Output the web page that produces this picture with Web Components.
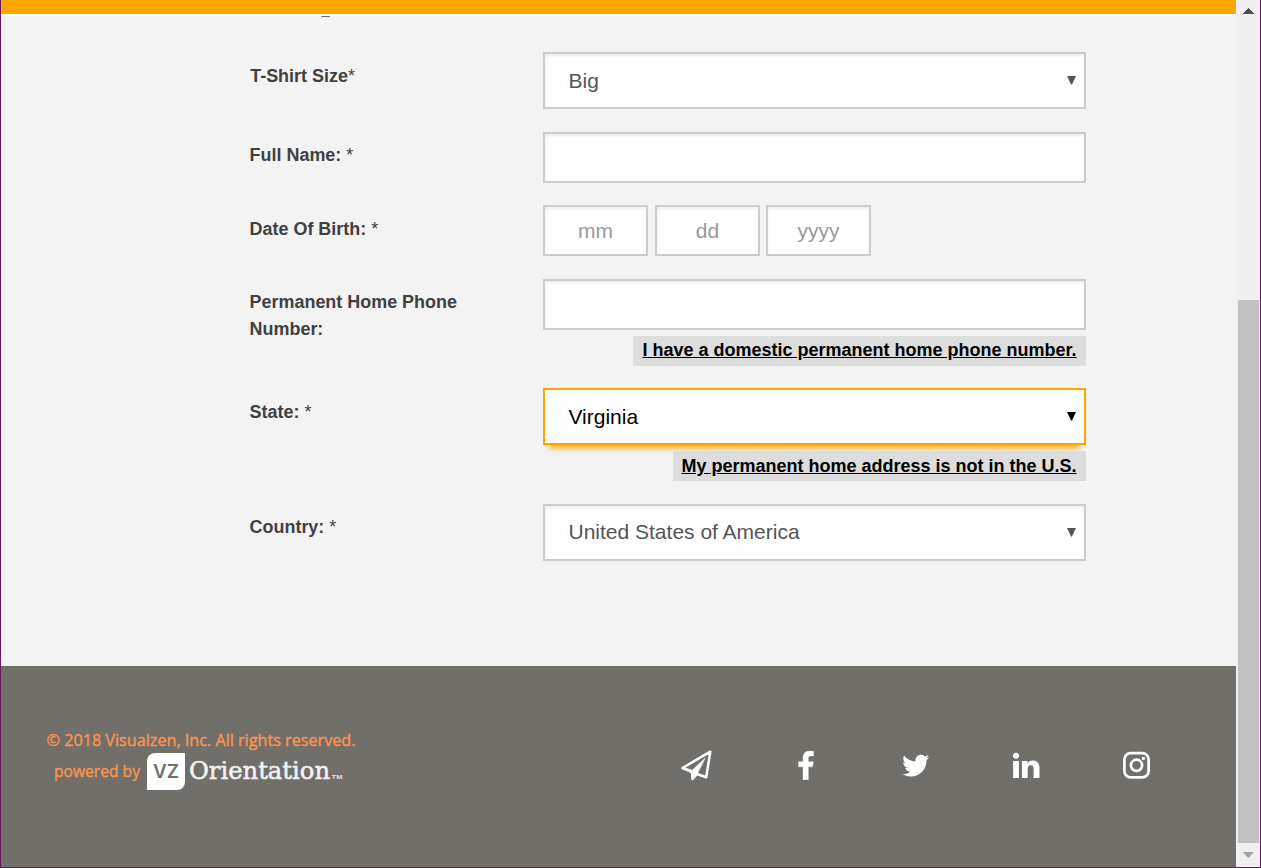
<!DOCTYPE html>
<html lang="en">
<head>
<meta charset="utf-8">
<title>Orientation</title>
<style>
html, body { margin: 0; height: 100%; overflow: hidden; }
body { font-family: "Liberation Sans", Arial, sans-serif; }
</style>
</head>
<body>
<app-window>
  <form-row label="T-Shirt Size" height="80" style="--label-x:.6px;--label-y:11px"><select-box>Big</select-box></form-row>
  <form-row label="Full Name: " height="73"><text-box></text-box></form-row>
  <form-row label="Date Of Birth: " height="74" style="--label-y:11px"><date-boxes></date-boxes></form-row>
  <form-row label="Permanent Home Phone Number:" height="109" optional><text-box></text-box><toggle-link>I have a domestic permanent home phone number.</toggle-link></form-row>
  <form-row label="State: " height="116" style="--label-y:11px;--link-line:30px"><select-box focused>Virginia</select-box><toggle-link>My permanent home address is not in the U.S.</toggle-link></form-row>
  <form-row label="Country: " height="57" style="--value-shift:2px"><select-box>United States of America</select-box></form-row>
  <site-footer slot="footer"></site-footer>
</app-window>
<script>
class Base extends HTMLElement {
  constructor() { super(); this.attachShadow({ mode: 'open' }); }
  connectedCallback() { this.shadowRoot.innerHTML = this.render(); }
}

customElements.define('app-window', class extends Base {
  render() { return `<style>
    :host { display: flex; box-sizing: border-box; width: 1261px; height: 868px; border: 1px solid #68195e; border-top: 0; background: #f3f3f3; }
    .page { flex: 1; display: flex; flex-direction: column; min-width: 0; }
    .bar { height: 14px; background: #ffa500; border-bottom: 2px solid #fff; }
    .prev { height: 36px; padding-left: 320px; }
    .prev i { display: block; width: 9px; height: 1px; background: #6a6a6a; border-radius: 0 0 4px 4px; }
    main { flex: 1; padding-left: 248.6px; }
  </style>
  <div class="page"><div class="bar"></div><div class="prev"><i></i></div><main><slot></slot></main><slot name="footer"></slot></div>
  <scroll-bar></scroll-bar>`; }
});

customElements.define('scroll-bar', class extends Base {
  render() { return `<style>
    :host { display: flex; flex-direction: column; align-items: center; width: 24px; background: #f0f0f0; }
    svg { display: block; width: 24px; height: 24px; }
    .track { flex: 1; width: 21px; padding-top: 276px; box-sizing: border-box; margin-left: 1px; }
    .thumb { height: 543px; background: #c1c1c1; }
  </style>
  <svg viewBox="0 0 24 24" shape-rendering="crispEdges"><path d="M6.5 14L12.3 7.8L18 14z" fill="#505050"/></svg>
  <div class="track"><div class="thumb"></div></div>
  <svg viewBox="0 0 24 24"><path d="M6.5 9H18L12.3 15z" fill="#a3a3a3"/></svg>`; }
});

customElements.define('form-row', class extends Base {
  render() {
    const star = this.hasAttribute('optional') ? '' : '<span>*</span>';
    return `<style>
    :host { display: grid; grid-template-columns: 293.4px 543px; height: ${this.getAttribute('height')}px; }
    .label { padding: var(--label-y, 10px) 50px 0 var(--label-x, 0); font: bold 17.95px/27px "Liberation Sans", Arial, sans-serif; color: #404040; }
    span { font-weight: normal; }
    .field { display: flex; flex-direction: column; align-items: flex-end; gap: 6px; }
  </style><div class="label">${this.getAttribute('label')}${star}</div><div class="field"><slot></slot></div>`; }
});

customElements.define('select-box', class extends Base {
  render() { return `<style>
    :host { display: flex; justify-content: space-between; align-items: center; box-sizing: border-box; width: 543px; height: 57px; padding: 0 8px 0 23.5px; border: 2px solid #ccc; background: #fff; box-shadow: inset 0 2px 3px rgba(0,0,0,.07); font-size: 21px; line-height: 24px; color: #555; }
    :host([focused]) { border-color: #ffa500; color: #000; box-shadow: 0 9px 6px -6px #ffa500; }
    .value { padding-bottom: var(--value-shift, 0); }
    svg { width: 9px; height: 9px; }
  </style><div class="value"><slot></slot></div><svg viewBox="0 0 9 9"><path d="M0 0H9L5 8.6H4z" fill="currentColor"/></svg>`; }
});

customElements.define('text-box', class extends Base {
  render() { return `<style>
    :host { display: flex; align-items: center; justify-content: center; box-sizing: border-box; width: 543px; height: 51px; border: 2px solid #ccc; background: #fff; box-shadow: inset 0 2px 3px rgba(0,0,0,.07); font-size: 21px; line-height: 24px; color: #999; }
    :host([part-box]) { width: 105px; }
  </style><slot></slot>`; }
});

customElements.define('date-boxes', class extends Base {
  render() { return `<style>
    :host { display: grid; grid-template-columns: 112px 111px 1fr; width: 543px; }
  </style><text-box part-box>mm</text-box><text-box part-box>dd</text-box><text-box part-box>yyyy</text-box>`; }
});

customElements.define('toggle-link', class extends Base {
  render() { return `<style>
    :host { display: block; box-sizing: border-box; height: 30px; padding: 0 9.4px 0 9px; background: #ddd; font-weight: bold; font-size: 18px; line-height: var(--link-line, 28px); color: #000; text-decoration: underline; }
  </style><slot></slot>`; }
});

customElements.define('vz-logo', class extends Base {
  render() { return `<style>
    :host { display: block; width: 200px; height: 37px; } svg { display: block; }
    text { font-family: "DejaVu Serif", serif; }
  </style><svg width="200" height="37" viewBox="0 0 200 37">
    <path d="M8 0H38V29a8 8 0 0 1-8 8H0V8a8 8 0 0 1 8-8z" fill="#fff"/>
    <text transform="translate(6 25)" textLength="26" lengthAdjust="spacingAndGlyphs" style="font-family:Inter,sans-serif;font-weight:600;font-size:18px" fill="#706f6a">VZ</text>
    <text x="42" y="26" font-size="24.5" textLength="141" lengthAdjust="spacingAndGlyphs" fill="#f2f2f2" stroke="#f2f2f2" stroke-width=".55">Orientation</text>
    <text x="184.5" y="26" style="font-family:'Liberation Sans',sans-serif;font-weight:bold" font-size="6" textLength="11" lengthAdjust="spacingAndGlyphs" fill="#e4e4e2">TM</text>
  </svg>`; }
});

const ICONS = {
  send: ['31 31', '<path d="M1.5 18L29.3 1.7L25.2 27.3L16 24L11.5 29V21.5zM1.5 18L11.5 22.3" fill="none" stroke="#fff" stroke-width="2.5" stroke-linejoin="round"/><path d="M25 7L16.5 24L11 30.5L9.5 21.5z" fill="#fff"/>'],
  facebook: ['16 29', '<path d="M15.5.3V4.9H12.8C10.7 4.9 10.3 5.9 10.3 7.4V10.7H15.3L14.6 15.8H10.3V28.8H5V15.8H.6V10.7H5V7C5 2.6 7.7.1 11.6.1 13.5.1 15 .2 15.5.3z" fill="#fff" stroke="#fff" stroke-width=".4"/>'],
  twitter: ['28 25', '<path transform="translate(.2 -.9) scale(.0528)" fill="#fff" d="M459.37 151.716c.325 4.548.325 9.097.325 13.645 0 138.72-105.583 298.558-298.558 298.558-59.452 0-114.68-17.219-161.137-47.106 8.447.974 16.568 1.299 25.34 1.299 49.055 0 94.213-16.568 130.274-44.832-46.132-.975-84.792-31.188-98.112-72.772 6.498.974 12.995 1.624 19.818 1.624 9.421 0 18.843-1.3 27.614-3.573-48.081-9.747-84.143-51.98-84.143-102.985v-1.299c13.969 7.797 30.214 12.67 47.431 13.319-28.264-18.843-46.781-51.005-46.781-87.391 0-19.492 5.197-37.36 14.294-52.954 51.655 63.675 129.3 105.258 216.365 109.807-1.624-7.797-2.599-15.918-2.599-24.04 0-57.828 46.782-104.934 104.934-104.934 30.213 0 57.502 12.67 76.67 33.137 23.715-4.548 46.456-13.32 66.599-25.34-7.798 24.366-24.366 44.833-46.132 57.827 21.117-2.273 41.584-8.122 60.426-16.243-14.292 20.791-32.161 39.308-52.628 54.253z"/>'],
  linkedin: ['28 26', '<g transform="translate(0 .8)"><circle cx="4" cy="3" r="3" fill="#fff"/><path d="M1.1 8.2H6.9V25.2H1.1zM9.9 8.2H15.6V10.6C16.5 9.1 18.2 7.8 21 7.8C25.6 7.8 27.5 11 27.5 15.4V25.2H21.6V16.1C21.6 13.8 20.8 12.5 18.8 12.5C16.7 12.5 15.7 13.8 15.7 16V25.2H9.9z" fill="#fff"/></g>'],
  instagram: ['27 28', '<g transform="translate(0 .8)"><rect x="1.4" y="1.4" width="24.2" height="24.2" rx="6.3" fill="none" stroke="#fff" stroke-width="2.7"/><circle cx="13.5" cy="13.5" r="5.6" fill="none" stroke="#fff" stroke-width="2.7"/><circle cx="20.4" cy="6.6" r="1.7" fill="#fff"/></g>']
};
customElements.define('social-icon', class extends Base {
  render() {
    const [size, art] = ICONS[this.getAttribute('name')];
    const [w, h] = size.split(' ');
    return `<style>:host { display: flex; align-items: center; justify-content: center; width: 110px; height: 32px; } svg { display: block; }</style>
    <svg width="${w}" height="${h}" viewBox="0 0 ${size}">${art}</svg>`;
  }
});

customElements.define('site-footer', class extends Base {
  render() { return `<style>
    :host { display: flex; justify-content: space-between; box-sizing: border-box; height: 201px; padding: 60px 45px 0 46px; background: #706f6a; }
    .copy { white-space: nowrap; }
    .copy svg { display: block; }
    .copy text { font: 500 16px "Open Sans", sans-serif; fill: #ff944d; stroke: #ff944d; stroke-width: .35px; }
    .by { display: flex; margin-top: -1px; }
    .by svg { width: 100px; }
    .social { display: flex; padding-top: 23px; }
  </style>
  <div class="copy"><svg width="320" height="28"><text x="-.5" y="20" textLength="309" lengthAdjust="spacingAndGlyphs">© 2018 Visualzen, Inc. All rights reserved.</text></svg>
    <div class="by"><svg width="100" height="37"><text x="7" y="24" textLength="86" lengthAdjust="spacingAndGlyphs">powered by</text></svg><vz-logo></vz-logo></div></div>
  <div class="social"><social-icon name="send"></social-icon><social-icon name="facebook"></social-icon><social-icon name="twitter"></social-icon><social-icon name="linkedin"></social-icon><social-icon name="instagram"></social-icon></div>`; }
});
</script>
</body>
</html>
